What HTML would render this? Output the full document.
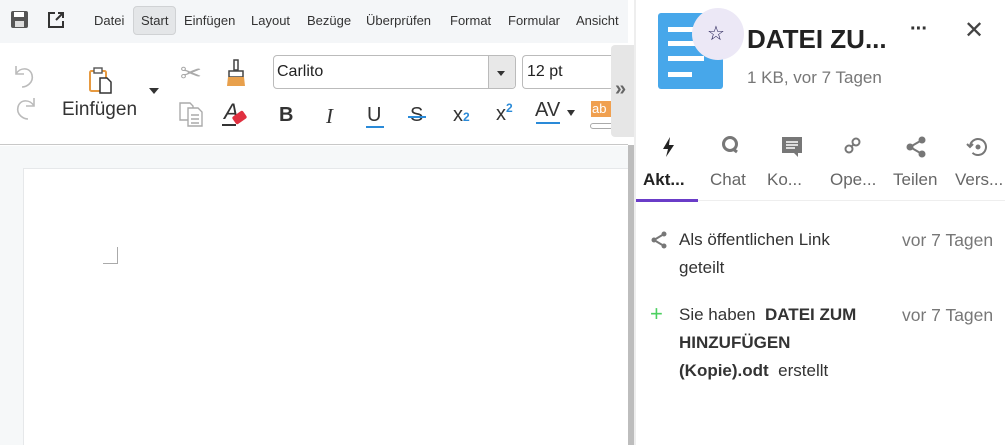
<!DOCTYPE html>
<html><head><meta charset="utf-8"><style>
*{margin:0;padding:0;box-sizing:border-box}
body{width:1005px;height:445px;overflow:hidden;font-family:"Liberation Sans",sans-serif;background:#fff;position:relative}
.a{position:absolute}
.menu span{position:absolute;top:13px;font-size:13px;color:#333}
.tab{position:absolute;top:170px;font-size:17px;color:#666;text-align:center}
.ico{position:absolute}
</style></head><body>
<div class="a" style="left:0;top:0;width:628px;height:43px;background:#f4f6f8"></div>
<div class="a" style="left:0;top:43px;width:628px;height:102px;background:#fff;border-bottom:1px solid #c8c8c8"></div>
<div class="a" style="left:0;top:146px;width:628px;height:299px;background:#f6f8f9"></div>
<div class="a" style="left:23px;top:168px;width:605px;height:277px;background:#fff;border-left:1px solid #e6e8ea;border-top:1px solid #e6e8ea"></div>
<div class="a" style="left:628px;top:145px;width:6px;height:300px;background:#bdbdbd"></div>
<div class="a" style="left:103px;top:247px;width:15px;height:17px;border-right:1px solid #aaa;border-bottom:1px solid #aaa"></div>
<svg class="ico" style="left:10px;top:10px" width="19" height="19" viewBox="0 0 19 19"><rect x="1" y="1" width="17" height="17" rx="2" fill="#555"/><rect x="4" y="2" width="10" height="5" fill="#fff"/><rect x="5" y="11" width="9" height="6" fill="#ddd"/></svg>
<svg class="ico" style="left:47px;top:11px" width="18" height="18" viewBox="0 0 18 18" fill="none" stroke="#333" stroke-width="2"><path d="M8 2H2v14h14v-6"/><path d="M9 9l7-7M11 2h5v5"/></svg>
<div class="a" style="left:133px;top:6px;width:43px;height:29px;background:#e4e6e8;border:1px solid #d0d2d4;border-radius:4px"></div>
<div class="menu"><span style="left:94px">Datei</span><span style="left:141px">Start</span><span style="left:184px">Einfügen</span><span style="left:251px">Layout</span><span style="left:307px">Bezüge</span><span style="left:366px">Überprüfen</span><span style="left:450px">Format</span><span style="left:508px">Formular</span><span style="left:576px">Ansicht</span></div>
<svg class="ico" style="left:12px;top:62px" width="26" height="58" viewBox="0 0 26 58" fill="none" stroke="#bbb" stroke-width="1.6"><path d="M4 4v8h8M4 12c4-7 14-7 16 1s-6 12-10 12"/><path d="M22 36v8h-8M22 44c-4-7-14-7-16 1s6 12 10 12"/></svg>
<svg class="ico" style="left:88px;top:66px" width="28" height="28" viewBox="0 0 28 28"><rect x="2" y="5" width="16" height="20" rx="1.5" fill="none" stroke="#e79a40" stroke-width="2"/><rect x="6" y="2" width="8" height="5" fill="#fff" stroke="#555" stroke-width="1.4"/><path d="M12 12h7l4 4v11H12z" fill="#fff" stroke="#333" stroke-width="1.5"/></svg>
<div class="a" style="left:62px;top:99px;font-size:19px;color:#333">Einfügen</div>
<div class="a" style="left:149px;top:88px;border:5px solid transparent;border-top:6px solid #333"></div>
<div class="a" style="left:180px;top:58px;font-size:26px;color:#aaa">✂</div>
<svg class="ico" style="left:224px;top:58px" width="24" height="30" viewBox="0 0 24 30"><rect x="10" y="2" width="4" height="10" fill="none" stroke="#444" stroke-width="1.5"/><path d="M5 13h14v6H5z" fill="#fff" stroke="#444" stroke-width="1.5"/><path d="M4 19h16l1 9H3z" fill="#e8a04c"/></svg>
<svg class="ico" style="left:178px;top:100px" width="28" height="28" viewBox="0 0 28 28" fill="#fff" stroke="#aaa" stroke-width="1.4"><path d="M2 3h10l3 3v14H2z"/><path d="M10 8h10l4 4v14H10z"/><path d="M13 15h8M13 19h8M13 23h8"/></svg>
<div class="a" style="left:224px;top:99px;font-size:22px;color:#333;font-style:italic">A</div>
<div class="a" style="left:222px;top:124px;width:14px;height:1.5px;background:#333"></div>
<div class="a" style="left:233px;top:113px;width:13px;height:9px;background:#e03040;transform:rotate(-35deg);border-radius:2px"></div>
<div class="a" style="left:273px;top:55px;width:243px;height:34px;border:1px solid #bbb;border-radius:4px;background:#fff"></div>
<div class="a" style="left:488px;top:56px;width:27px;height:32px;background:#e8e8e8;border-left:1px solid #bbb;border-radius:0 4px 4px 0"></div>
<div class="a" style="left:497px;top:71px;border:4px solid transparent;border-top:5px solid #333"></div>
<div class="a" style="left:277px;top:63px;font-size:16px;color:#222">Carlito</div>
<div class="a" style="left:522px;top:55px;width:96px;height:34px;border:1px solid #bbb;border-radius:4px 0 0 4px;border-right:none;background:#fff"></div>
<div class="a" style="left:527px;top:63px;font-size:16px;color:#222">12 pt</div>
<div class="a" style="left:279px;top:104px;font-size:20px;font-weight:bold;color:#333">B</div>
<div class="a" style="left:326px;top:104px;font-size:21px;font-style:italic;color:#333;font-family:'Liberation Serif',serif">I</div>
<div class="a" style="left:367px;top:104px;font-size:20px;color:#333">U</div><div class="a" style="left:366px;top:126px;width:18px;height:2px;background:#2a8ad8"></div>
<div class="a" style="left:410px;top:104px;font-size:20px;color:#333">S</div><div class="a" style="left:408px;top:116px;width:18px;height:2px;background:#2a8ad8"></div>
<div class="a" style="left:453px;top:104px;font-size:20px;color:#333">x<span style="font-size:12px;color:#2a8ad8;font-weight:bold">2</span></div>
<div class="a" style="left:496px;top:101px;font-size:20px;color:#333">x<span style="font-size:12px;color:#2a8ad8;font-weight:bold;vertical-align:8px">2</span></div>
<div class="a" style="left:535px;top:99px;font-size:20px;color:#333">AV</div>
<div class="a" style="left:536px;top:122px;width:24px;height:2px;background:#2a8ad8"></div>
<div class="a" style="left:567px;top:110px;border:4px solid transparent;border-top:6px solid #333"></div>
<div class="a" style="left:591px;top:101px;width:20px;height:16px;background:#f0a050;color:#fff;font-size:13px;padding-left:1px">ab</div>
<div class="a" style="left:590px;top:123px;width:28px;height:6px;border:1px solid #aaa;border-radius:3px"></div>
<div class="a" style="left:611px;top:45px;width:23px;height:92px;background:#e6e6e6;border-radius:4px 0 0 4px"></div>
<div class="a" style="left:615px;top:78px;font-size:20px;color:#666;font-weight:bold">»</div>
<div class="a" style="left:634px;top:0;width:2px;height:445px;background:#eee"></div>
<div class="a" style="left:658px;top:13px;width:65px;height:76px;background:#47a7ea;border-radius:3px"></div>
<div class="a" style="left:668px;top:27px;width:28px;height:5px;background:#fff"></div>
<div class="a" style="left:668px;top:41px;width:36px;height:5px;background:#fff"></div>
<div class="a" style="left:668px;top:56px;width:36px;height:5px;background:#fff"></div>
<div class="a" style="left:668px;top:72px;width:24px;height:5px;background:#fff"></div>
<div class="a" style="left:692px;top:8px;width:52px;height:52px;border-radius:50%;background:#ece8f6"></div>
<div class="a" style="left:707px;top:21px;font-size:20px;color:#1e1850">☆</div>
<div class="a" style="left:747px;top:24px;font-size:26px;font-weight:bold;color:#222">DATEI ZU...</div>
<div class="a" style="left:747px;top:68px;font-size:17px;color:#777">1 KB, vor 7 Tagen</div>
<div class="a" style="left:910px;top:18px;font-size:20px;color:#333;font-weight:bold;letter-spacing:-1px">···</div>
<div class="a" style="left:964px;top:16px;font-size:24px;color:#444">✕</div>
<svg class="ico" style="left:660px;top:136px" width="16" height="22" viewBox="0 0 16 22"><path d="M10 1L3 13h5l-2 8 8-12H9z" fill="#222"/></svg>
<svg class="ico" style="left:720px;top:135px" width="20" height="20" viewBox="0 0 20 20"><circle cx="10" cy="9" r="6.5" fill="none" stroke="#777" stroke-width="3"/><path d="M13 14l4 3" stroke="#777" stroke-width="3"/></svg>
<svg class="ico" style="left:781px;top:136px" width="22" height="22" viewBox="0 0 22 22"><path d="M1 1h20v16H17v4l-4-4H1z" fill="#777"/><path d="M5 6h12M5 9h12M5 12h9" stroke="#fff" stroke-width="1.5"/></svg>
<svg class="ico" style="left:843px;top:136px" width="20" height="20" viewBox="0 0 20 20" fill="none" stroke="#777" stroke-width="2"><circle cx="13" cy="6" r="3.5"/><circle cx="6" cy="13" r="3.5"/><path d="M9 10l2-2"/></svg>
<svg class="ico" style="left:905px;top:136px" width="22" height="22" viewBox="0 0 22 22"><circle cx="17" cy="4" r="3.5" fill="#777"/><circle cx="5" cy="11" r="3.5" fill="#777"/><circle cx="17" cy="18" r="3.5" fill="#777"/><path d="M17 4L5 11l12 7" stroke="#777" stroke-width="2" fill="none"/></svg>
<svg class="ico" style="left:966px;top:136px" width="22" height="22" viewBox="0 0 22 22" fill="none" stroke="#777" stroke-width="2"><path d="M4 11a8 8 0 1 1 2.5 5.8"/><path d="M1 8l3 3 3-3"/><circle cx="12" cy="11" r="1.5" fill="#777"/></svg>
<div class="tab" style="left:643px;font-weight:bold;color:#222">Akt...</div>
<div class="tab" style="left:710px">Chat</div>
<div class="tab" style="left:767px">Ko...</div>
<div class="tab" style="left:830px">Ope...</div>
<div class="tab" style="left:893px">Teilen</div>
<div class="tab" style="left:955px">Vers...</div>
<div class="a" style="left:636px;top:200px;width:369px;height:1px;background:#eee"></div>
<div class="a" style="left:636px;top:199px;width:62px;height:3px;background:#6a3cc8"></div>
<svg class="ico" style="left:650px;top:231px" width="18" height="18" viewBox="0 0 18 18"><circle cx="14" cy="3" r="2.5" fill="#777"/><circle cx="4" cy="9" r="2.5" fill="#777"/><circle cx="14" cy="15" r="2.5" fill="#777"/><path d="M14 3L4 9l10 6" stroke="#777" stroke-width="2" fill="none"/></svg>
<div class="a" style="left:679px;top:226px;font-size:17px;color:#333;line-height:28px;width:190px">Als öffentlichen Link<br>geteilt</div>
<div class="a" style="left:902px;top:226px;font-size:17.5px;color:#777;line-height:28px">vor 7 Tagen</div>
<div class="a" style="left:650px;top:300px;font-size:22px;color:#4cd060;line-height:28px">+</div>
<div class="a" style="left:679px;top:301px;font-size:17px;color:#333;line-height:28px;width:210px">Sie haben&nbsp; <b>DATEI ZUM HINZUFÜGEN (Kopie).odt</b>&nbsp; erstellt</div>
<div class="a" style="left:902px;top:301px;font-size:17.5px;color:#777;line-height:28px">vor 7 Tagen</div>
</body></html>
